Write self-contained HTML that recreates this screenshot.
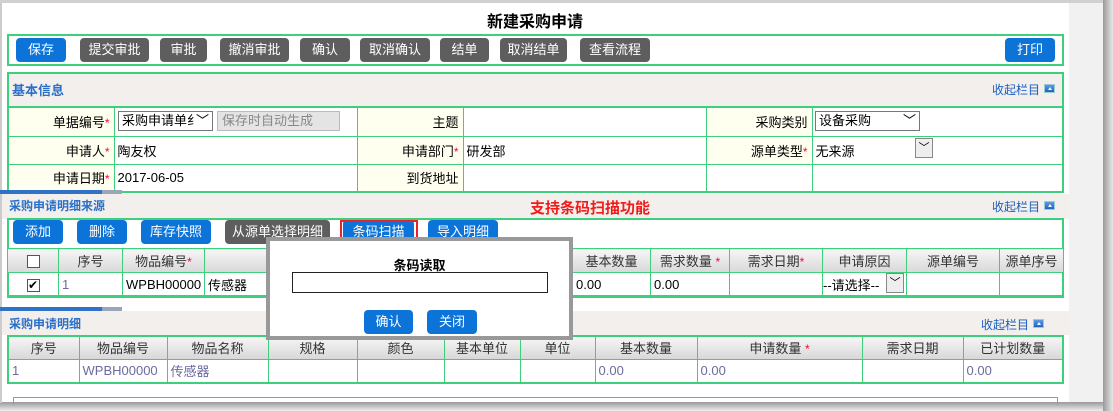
<!DOCTYPE html>
<html><head><meta charset="utf-8"><style>
*{margin:0;padding:0;box-sizing:border-box}
body{width:1113px;height:411px;overflow:hidden;background:#fff;font-family:"Liberation Sans","Noto Sans CJK SC",sans-serif;font-size:12px;color:#000;position:relative}
.a{position:absolute}
.btn{position:absolute;height:24px;border-radius:4px;color:#fff;font-size:13px;text-align:center;line-height:24px}
.b{background:#0c73d8}.g{background:#5e5e5e}
.box{position:absolute;border:2px solid #3ecf7d}
.hd{position:absolute;background:#f2efec}
.ht{position:absolute;color:#2a6fc9;font-weight:bold;font-size:13px}
.col{position:absolute;color:#1a5fc0;font-size:12px}
.ic{position:absolute;width:11px;height:9px;background:linear-gradient(#5b9be6,#1f63c3);border:1px solid #9cc}
.ic:after{content:"";position:absolute;left:3px;top:2px;border:2px solid transparent;border-bottom:3px solid #fff;border-top:0}
table{position:absolute;border-collapse:collapse;table-layout:fixed}
td{border:1px solid #3ecf7d;padding:0 3px;font-size:13px;white-space:nowrap;overflow:hidden;vertical-align:middle}
.th td{background:linear-gradient(#f6f6f6,#d8d8d8);text-align:center;color:#333}
.lb{background:#fffff0;text-align:right;padding-right:4px}
.st{color:#f03;font-size:12px}
.sel{position:absolute;border:1px solid #777;background:#fff;font-size:13px;line-height:18px;padding-left:3px}
.dd{position:absolute;width:18px;height:20px;border:1px solid #888;background:#eee;text-align:center;font-size:11px;line-height:19px}
.gr td{color:#6a6aa0}
.cb{display:inline-block;width:13px;height:13px;border:1px solid #555;background:#fff;vertical-align:middle;font-size:12px;line-height:11px;text-align:center}
</style></head><body>
<div class="a" style="left:0;top:0;width:1113px;height:3px;background:#d0d0d0"></div>
<div class="a" style="left:1069px;top:3px;width:34px;height:400px;background:#f1f1f1"></div>
<div class="a" style="left:1103px;top:0;width:10px;height:411px;background:linear-gradient(90deg,#999,#e8e8e8)"></div>
<div class="a" style="left:0;top:402px;width:1103px;height:9px;background:linear-gradient(#999,#eee)"></div>
<div class="a" style="left:0;top:3px;width:2px;height:400px;background:#ccc"></div>

<div class="a" style="left:0;width:1070px;top:8px;text-align:center;font-size:16px;font-weight:bold">新建采购申请</div>

<div class="box" style="left:7px;top:34px;width:1057px;height:32px"></div>
<div class="btn b" style="left:16px;top:38px;width:50px">保存</div>
<div class="btn g" style="left:80px;top:38px;width:69px">提交审批</div>
<div class="btn g" style="left:160px;top:38px;width:47px">审批</div>
<div class="btn g" style="left:220px;top:38px;width:69px">撤消审批</div>
<div class="btn g" style="left:300px;top:38px;width:50px">确认</div>
<div class="btn g" style="left:360px;top:38px;width:70px">取消确认</div>
<div class="btn g" style="left:440px;top:38px;width:49px">结单</div>
<div class="btn g" style="left:500px;top:38px;width:67px">取消结单</div>
<div class="btn g" style="left:580px;top:38px;width:70px">查看流程</div>
<div class="btn b" style="left:1005px;top:38px;width:50px">打印</div>

<div class="hd" style="left:7px;top:72px;width:1057px;height:34px;border:2px solid #3ecf7d;border-bottom:0"></div>
<div class="ht" style="left:12px;top:80px">基本信息</div>
<div class="col" style="left:992px;top:81px">收起栏目</div><div class="ic" style="left:1044px;top:84px"></div>
<table style="left:7px;top:106px;width:1057px;border:2px solid #3ecf7d">
<colgroup><col style="width:106px"><col style="width:243px"><col style="width:106px"><col style="width:243px"><col style="width:106px"><col></colgroup>
<tr style="height:29px"><td class="lb">单据编号<span class="st">*</span></td><td></td><td class="lb">主题</td><td></td><td class="lb">采购类别</td><td></td></tr>
<tr style="height:28px"><td class="lb">申请人<span class="st">*</span></td><td>陶友权</td><td class="lb">申请部门<span class="st">*</span></td><td>研发部</td><td class="lb">源单类型<span class="st">*</span></td><td>无来源</td></tr>
<tr style="height:28px"><td class="lb">申请日期<span class="st">*</span></td><td>2017-06-05</td><td class="lb">到货地址</td><td></td><td></td><td></td></tr>
</table>
<div class="sel" style="left:118px;top:111px;width:95px;height:20px">采购申请单纟<span style="position:absolute;right:3px">﹀</span></div>
<div class="a" style="left:217px;top:111px;width:123px;height:20px;background:#e4e4e4;border:1px solid #bbb;color:#888;font-size:13px;line-height:18px;padding-left:4px">保存时自动生成</div>
<div class="sel" style="left:815px;top:111px;width:105px;height:20px">设备采购<span style="position:absolute;right:3px">﹀</span></div>
<div class="dd" style="left:915px;top:138px">﹀</div>

<div class="a" style="left:0;top:190px;width:102px;height:4px;background:#2f72c8"></div>
<div class="a" style="left:102px;top:190px;width:20px;height:4px;background:#9aa6b8"></div>
<div class="hd" style="left:2px;top:194px;width:1067px;height:25px"></div>
<div class="ht" style="left:9px;top:197px;font-size:12px">采购申请明细来源</div>
<div class="a" style="left:530px;top:200px;color:#f01c1c;font-weight:bold;font-size:15px;line-height:18px">支持条码扫描功能</div>
<div class="col" style="left:992px;top:198px">收起栏目</div><div class="ic" style="left:1044px;top:201px"></div>
<div class="box" style="left:7px;top:218px;width:1057px;height:80px;border-bottom-width:3px"></div>
<div class="btn b" style="left:13px;top:220px;width:50px">添加</div>
<div class="btn b" style="left:77px;top:220px;width:50px">删除</div>
<div class="btn b" style="left:141px;top:220px;width:70px">库存快照</div>
<div class="btn g" style="left:225px;top:220px;width:105px">从源单选择明细</div>
<div class="btn b" style="left:343px;top:220px;width:71px">条码扫描</div>
<div class="btn b" style="left:428px;top:220px;width:70px">导入明细</div>
<div class="a" style="left:340px;top:220px;width:78px;height:29px;border:2px solid #e8232b"></div>
<table style="left:7px;top:248px;width:1057px">
<colgroup><col style="width:51px"><col style="width:64px"><col style="width:82px"><col style="width:368px"><col style="width:78px"><col style="width:79px"><col style="width:93px"><col style="width:84px"><col style="width:93px"><col></colgroup>
<tr class="th" style="height:24px"><td><span class="cb"></span></td><td>序号</td><td>物品编号<span class="st">*</span></td><td>物品名称</td><td>基本数量</td><td>需求数量 <span class="st">*</span></td><td>需求日期<span class="st">*</span></td><td>申请原因</td><td>源单编号</td><td>源单序号</td></tr>
<tr style="height:24px"><td style="text-align:center"><span class="cb">✔</span></td><td style="color:#6a6aa0">1</td><td>WPBH00000</td><td>传感器</td><td>0.00</td><td>0.00</td><td></td><td style="padding:0">--请选择--</td><td></td><td></td></tr>
</table>
<div class="dd" style="left:886px;top:273px">﹀</div>

<div class="a" style="left:0;top:307px;width:102px;height:4px;background:#2f72c8"></div>
<div class="a" style="left:102px;top:307px;width:20px;height:4px;background:#9aa6b8"></div>
<div class="hd" style="left:2px;top:311px;width:1067px;height:24px"></div>
<div class="ht" style="left:9px;top:315px;font-size:12px">采购申请明细</div>
<div class="col" style="left:981px;top:316px">收起栏目</div><div class="ic" style="left:1033px;top:319px"></div>
<table style="left:7px;top:335px;width:1057px;border:2px solid #3ecf7d">
<colgroup><col style="width:71px"><col style="width:88px"><col style="width:101px"><col style="width:89px"><col style="width:87px"><col style="width:76px"><col style="width:75px"><col style="width:102px"><col style="width:165px"><col style="width:101px"><col></colgroup>
<tr class="th" style="height:23px"><td>序号</td><td>物品编号</td><td>物品名称</td><td>规格</td><td>颜色</td><td>基本单位</td><td>单位</td><td>基本数量</td><td>申请数量 <span class="st">*</span></td><td>需求日期</td><td>已计划数量</td></tr>
<tr class="gr" style="height:24px"><td>1</td><td>WPBH00000</td><td>传感器</td><td></td><td></td><td></td><td></td><td>0.00</td><td>0.00</td><td></td><td>0.00</td></tr>
</table>
<div class="a" style="left:13px;top:397px;width:1045px;height:8px;border:1px solid #3ecf7d;border-bottom:0"></div>

<div class="a" style="left:266px;top:237px;width:307px;height:103px;border:4px solid #999;background:#fff"></div>
<div class="a" style="left:266px;top:255px;width:307px;text-align:center;font-weight:bold;font-size:13px">条码读取</div>
<div class="a" style="left:292px;top:272px;width:256px;height:21px;border:1px solid #222"></div>
<div class="btn b" style="left:364px;top:310px;width:49px">确认</div>
<div class="btn b" style="left:427px;top:310px;width:50px">关闭</div>
</body></html>
